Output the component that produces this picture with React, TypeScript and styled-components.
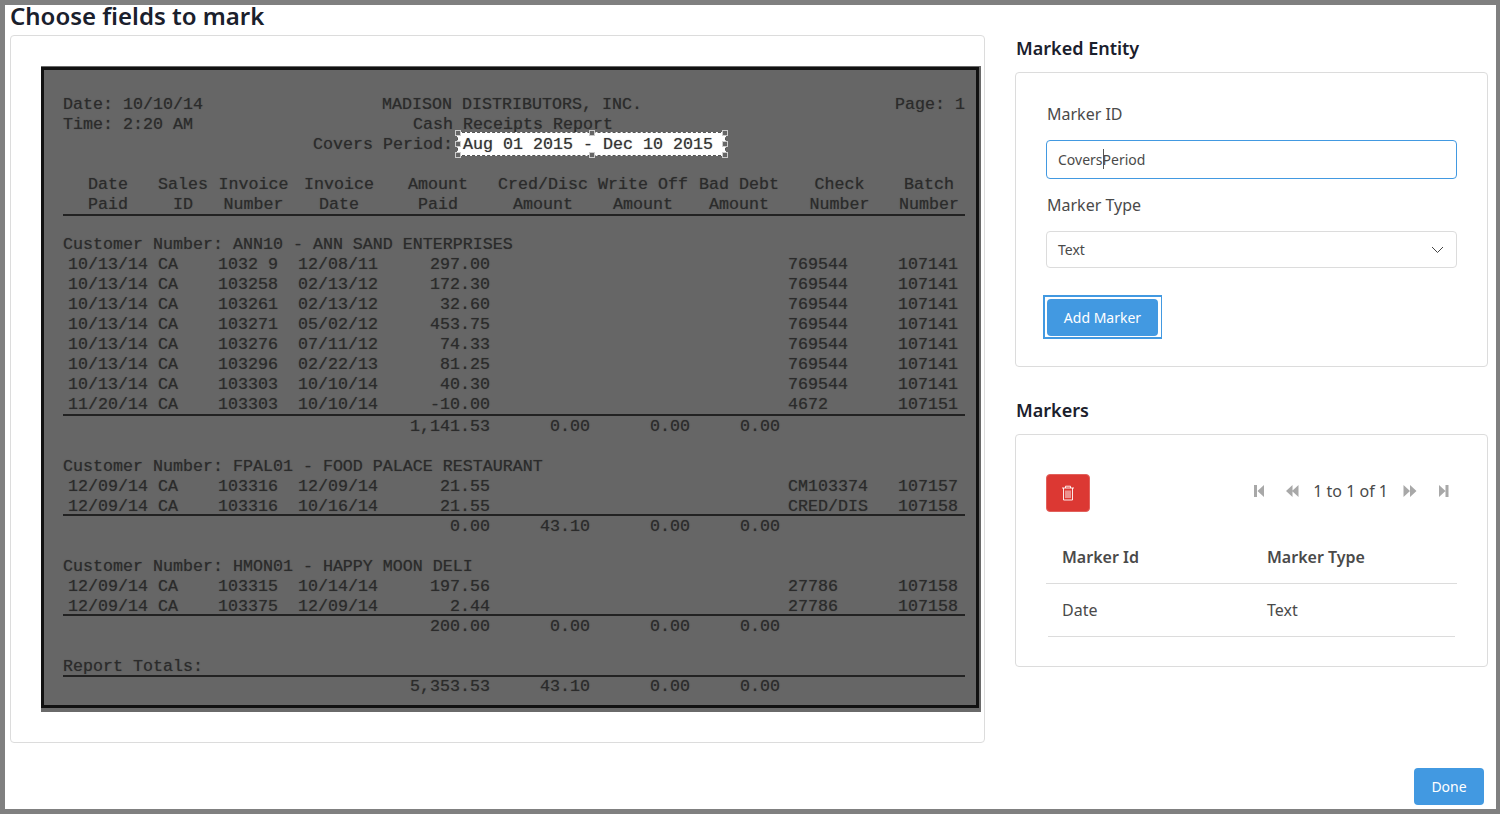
import React from 'react'
import styled, { createGlobalStyle } from 'styled-components'

const GlobalStyle = createGlobalStyle`
  html, body { margin: 0; padding: 0; background: #fff; }
  body { font-family: "Noto Sans", "Open Sans", sans-serif; color: #4a4a4a; }
  * { box-sizing: border-box; }
`

const Frame = styled.div`
  height: 814px;
  border: 5px solid #808080;
  border-right-width: 4px;
  padding: 0 8px 0 5px;
  position: relative;
  overflow: hidden;
`

const PageTitle = styled.h1`
  margin: 0;
  height: 30px;
  font-size: 24px;
  line-height: 22px;
  font-weight: 600;
  color: #1a202c;
`

const Columns = styled.div`
  display: grid;
  grid-template-columns: 975px 473px;
  column-gap: 30px;
`

const Card = styled.section<{ $height: number }>`
  height: ${p => p.$height}px;
  border: 1px solid #dcdcdc;
  border-radius: 4px;
  padding: 30px;
  background: #fff;
`

const DocCard = styled(Card)`
  padding-right: 3px;
`

const Sheet = styled.div`
  width: 940px;
  height: 646px;
  padding: 1px 2px 4px 0;
  background: #6a6a6a;
`

const ReportFrame = styled.div`
  height: 100%;
  border: 3px solid #111;
  background: #666;
  padding: 25px 11px 0 19px;
  font-family: "Liberation Mono", "Courier New", monospace;
  font-size: 16.67px;
  line-height: 20px;
  color: #2b2b2b;
  white-space: pre;
  text-shadow: 0 0 1px rgba(40, 40, 40, 0.55);
`

const Masthead = styled.div`
  display: flex;
  margin-bottom: 20px;
`

const MastLeft = styled.div`
  width: 250px;
`

const MastTitle = styled.div`
  position: relative;
  flex: 1;
`

const TitleLine = styled.div<{ $indent?: number }>`
  padding-left: ${p => p.$indent ?? 0}px;
`

const Selection = styled.div`
  position: absolute;
  left: 144px;
  top: 37px;
  width: 269px;
  height: 24px;
  padding-left: 5px;
  background: #fff;
  border: 1px dashed #555;
  color: #333;
  line-height: 24px;
`

const Handle = styled.i<{ $x: number; $y: number }>`
  position: absolute;
  left: ${p => p.$x}%;
  top: ${p => p.$y}%;
  width: 6px;
  height: 6px;
  transform: translate(-50%, -50%);
  background: #666;
  border: 1px solid #ccc;
`

// the rule printed under a row of the report; $rule is how far it sits above the row's bottom edge
const ruled = (lift?: number) =>
  lift === undefined
    ? ''
    : `
  position: relative;
  &::after {
    content: '';
    position: absolute;
    left: 0;
    right: 0;
    bottom: ${lift}px;
    height: 2px;
    background: #222;
  }
`

const HeadRow = styled.div<{ $rule?: number }>`
  display: grid;
  grid-template-columns: 90px 60px 81px 90px 108px 102px 98px 94px 107px 1fr;
  text-align: center;
  ${p => ruled(p.$rule)}
`

const CustomerRow = styled.div<{ $top?: number; $rule?: number }>`
  margin-top: ${p => p.$top ?? 0}px;
  ${p => ruled(p.$rule)}
`

const DataRow = styled.div<{ $rule?: number; $top?: number }>`
  display: grid;
  grid-template-columns: 150px 80px 112px 80px 100px 100px 90px 118px 1fr;
  padding-left: 5px;
  height: 20px;
  margin-top: ${p => p.$top ?? 0}px;
  ${p => ruled(p.$rule)}
`

const Num = styled.span`
  text-align: right;
`

const Check = styled.span`
  padding-left: 8px;
`

const SectionTitle = styled.h2`
  margin: 0;
  height: 37px;
  padding-left: 1px;
  font-size: 18px;
  line-height: 26px;
  font-weight: 600;
  color: #1a202c;
`

const MarkersTitle = styled(SectionTitle)`
  margin-top: 30px;
`

const Label = styled.div<{ $top?: number }>`
  margin-top: ${p => p.$top ?? 0}px;
  padding-left: 1px;
  font-size: 16px;
  line-height: 24px;
  color: #4a4a4a;
`

const InputBox = styled.div`
  height: 39px;
  margin: 14px 0 14px;
  padding: 0 11px;
  border: 1px solid #4299e1;
  border-radius: 4px;
  font-size: 14px;
  line-height: 37px;
  color: #4a4a4a;
  display: flex;
`

const Caret = styled.span`
  width: 1px;
  height: 20px;
  margin: 8px -1px 0 0;
  background: #555;
`

const SelectBox = styled.div`
  height: 37px;
  margin: 14px 0 0;
  padding: 0 12px 0 11px;
  border: 1px solid #dcdcdc;
  border-radius: 4px;
  font-size: 14px;
  line-height: 35px;
  color: #4a4a4a;
  display: flex;
  align-items: center;
  justify-content: space-between;
`

const Button = styled.button`
  display: block;
  height: 37px;
  padding: 0 16px;
  border: 0;
  border-radius: 4px;
  background: #4299e1;
  color: #fff;
  font-family: inherit;
  font-size: 14px;
  line-height: 37px;
`

const AddButton = styled(Button)`
  position: relative;
  margin: 31px 0 0 1px;
  width: 111px;
  padding: 0;

  &::after {
    content: '';
    position: absolute;
    inset: -4px -4px -3px -4px;
    border: solid #4299e1;
    border-width: 2px 1px 2px 2px;
  }
`

const DoneButton = styled(Button)`
  position: absolute;
  right: 12px;
  bottom: 4px;
  width: 70px;
  padding: 0;
`

const Toolbar = styled.div`
  display: flex;
  justify-content: space-between;
  align-items: flex-start;
  margin-top: 9px;
`

const DeleteButton = styled.button`
  width: 44px;
  height: 38px;
  padding: 0;
  border: 1px solid #e2615c;
  border-radius: 4px;
  background: #dc3833;
  display: flex;
  align-items: center;
  justify-content: center;
`

const Pager = styled.div`
  display: flex;
  align-items: center;
  gap: 14px;
  height: 24px;
  margin: 5px 5px 0 0;
  font-size: 16px;
  line-height: 24px;
  color: #4a4a4a;
`

const PagerIcon = styled.svg<{ $before?: number; $after?: number }>`
  width: 16px;
  height: 14px;
  fill: #a8a8a8;
  margin-left: ${p => p.$before ?? 0}px;
  margin-right: ${p => p.$after ?? 0}px;
`

const TableRow = styled.div<{ $inset?: number; $head?: boolean }>`
  display: grid;
  grid-template-columns: 205px 1fr;
  margin: 0 ${p => p.$inset ?? 0}px;
  padding-left: ${p => 16 - (p.$inset ?? 0)}px;
  height: 53px;
  border-bottom: 1px solid #dcdcdc;
  font-size: 16px;
  font-weight: ${p => (p.$head ? 600 : 400)};
  line-height: ${p => (p.$head ? 52 : 53)}px;
  color: #4a4a4a;
`

const TableHead = styled(TableRow)`
  margin-top: 19px;
`

type Cells = [string, string, string, string, string?, string?, string?, string?, string?]

const receipts1: Cells[] = [
  ['10/13/14 CA', '1032 9', '12/08/11', '297.00', '', '', '', '769544', '107141'],
  ['10/13/14 CA', '103258', '02/13/12', '172.30', '', '', '', '769544', '107141'],
  ['10/13/14 CA', '103261', '02/13/12', '32.60', '', '', '', '769544', '107141'],
  ['10/13/14 CA', '103271', '05/02/12', '453.75', '', '', '', '769544', '107141'],
  ['10/13/14 CA', '103276', '07/11/12', '74.33', '', '', '', '769544', '107141'],
  ['10/13/14 CA', '103296', '02/22/13', '81.25', '', '', '', '769544', '107141'],
  ['10/13/14 CA', '103303', '10/10/14', '40.30', '', '', '', '769544', '107141'],
  ['11/20/14 CA', '103303', '10/10/14', '-10.00', '', '', '', '4672', '107151'],
]

const receipts2: Cells[] = [
  ['12/09/14 CA', '103316', '12/09/14', '21.55', '', '', '', 'CM103374', '107157'],
  ['12/09/14 CA', '103316', '10/16/14', '21.55', '', '', '', 'CRED/DIS', '107158'],
]

const receipts3: Cells[] = [
  ['12/09/14 CA', '103315', '10/14/14', '197.56', '', '', '', '27786', '107158'],
  ['12/09/14 CA', '103375', '12/09/14', '2.44', '', '', '', '27786', '107158'],
]

const Row = ({ cells, rule, top }: { cells: Cells; rule?: number; top?: number }) => (
  <DataRow $rule={rule} $top={top}>
    <span>{cells[0]}</span>
    <span>{cells[1]}</span>
    <span>{cells[2]}</span>
    <Num>{cells[3]}</Num>
    <Num>{cells[4]}</Num>
    <Num>{cells[5]}</Num>
    <Num>{cells[6]}</Num>
    <Check>{cells[7]}</Check>
    <span>{cells[8]}</span>
  </DataRow>
)

const handles = [
  [0, 0], [50, 0], [100, 0],
  [0, 50], [100, 50],
  [0, 100], [50, 100], [100, 100],
]

const Report = () => (
  <Sheet>
    <ReportFrame>
      <Masthead>
        <MastLeft>
          <div>Date: 10/10/14</div>
          <div>Time: 2:20 AM</div>
        </MastLeft>
        <MastTitle>
          <TitleLine $indent={69}>MADISON DISTRIBUTORS, INC.</TitleLine>
          <TitleLine $indent={100}>Cash Receipts Report</TitleLine>
          <TitleLine>Covers Period:</TitleLine>
          <Selection>
            Aug 01 2015 - Dec 10 2015
            {handles.map(([x, y]) => <Handle key={`${x}-${y}`} $x={x} $y={y} />)}
          </Selection>
        </MastTitle>
        <div>Page: 1</div>
      </Masthead>
      <HeadRow>
        <span>Date</span><span>Sales</span><span>Invoice</span><span>Invoice</span><span>Amount</span>
        <span>Cred/Disc</span><span>Write Off</span><span>Bad Debt</span><span>Check</span><span>Batch</span>
      </HeadRow>
      <HeadRow $rule={-1}>
        <span>Paid</span><span>ID</span><span>Number</span><span>Date</span><span>Paid</span>
        <span>Amount</span><span>Amount</span><span>Amount</span><span>Number</span><span>Number</span>
      </HeadRow>
      <CustomerRow $top={20}>Customer Number: ANN10 - ANN SAND ENTERPRISES</CustomerRow>
      {receipts1.map((r, i) => <Row key={i} cells={r} rule={i === receipts1.length - 1 ? -1 : undefined} />)}
      <Row cells={['', '', '', '1,141.53', '0.00', '0.00', '0.00']} top={2} />
      <CustomerRow $top={20}>Customer Number: FPAL01 - FOOD PALACE RESTAURANT</CustomerRow>
      {receipts2.map((r, i) => <Row key={i} cells={r} rule={i === receipts2.length - 1 ? 1 : undefined} />)}
      <Row cells={['', '', '', '0.00', '43.10', '0.00', '0.00']} />
      <CustomerRow $top={20}>Customer Number: HMON01 - HAPPY MOON DELI</CustomerRow>
      {receipts3.map((r, i) => <Row key={i} cells={r} rule={i === receipts3.length - 1 ? 1 : undefined} />)}
      <Row cells={['', '', '', '200.00', '0.00', '0.00', '0.00']} />
      <CustomerRow $top={20} $rule={0}>Report Totals:</CustomerRow>
      <Row cells={['', '', '', '5,353.53', '43.10', '0.00', '0.00']} />
    </ReportFrame>
  </Sheet>
)

const Chevron = () => (
  <svg width="13" height="8" viewBox="0 0 13 8" fill="none" stroke="#444" strokeWidth="1">
    <path d="M1 1l5.5 5.5L12 1" />
  </svg>
)

const TrashIcon = () => (
  <svg width="14" height="16" viewBox="0 0 14 16" fill="none" stroke="#fff" strokeWidth="0.9">
    <path d="M1 3h12M4.5 3V1.2h5V3M2.5 3v12h9V3M5 5.5v7.5M7 5.5v7.5M9 5.5v7.5" />
  </svg>
)

const App = () => (
  <Frame>
    <GlobalStyle />
    <PageTitle>Choose fields to mark</PageTitle>
    <Columns>
      <DocCard $height={708}>
        <Report />
      </DocCard>
      <div>
        <SectionTitle>Marked Entity</SectionTitle>
        <Card $height={295}>
          <Label $top={-1}>Marker ID</Label>
          <InputBox>Covers<Caret />Period</InputBox>
          <Label>Marker Type</Label>
          <SelectBox>Text<Chevron /></SelectBox>
          <AddButton>Add Marker</AddButton>
        </Card>
        <MarkersTitle>Markers</MarkersTitle>
        <Card $height={233}>
          <Toolbar>
            <DeleteButton aria-label="Delete"><TrashIcon /></DeleteButton>
            <Pager>
              <PagerIcon viewBox="0 0 16 14" $after={4}><path d="M5 1h3v12H5zM8.5 7L15 1v12z" /></PagerIcon>
              <PagerIcon viewBox="0 0 16 14"><path d="M3 7l6.5-6v12zM9 7l6.5-6v12z" /></PagerIcon>
              <span>1 to 1 of 1</span>
              <PagerIcon viewBox="0 0 16 14"><path d="M1.5 1L8 7l-6.5 6zM8 1l6.5 6L8 13z" /></PagerIcon>
              <PagerIcon viewBox="0 0 16 14" $before={4}><path d="M3 1l6.5 6L3 13zM9.5 1h3v12h-3z" /></PagerIcon>
            </Pager>
          </Toolbar>
          <TableHead $head>
            <span>Marker Id</span>
            <span>Marker Type</span>
          </TableHead>
          <TableRow $inset={2}>
            <span>Date</span>
            <span>Text</span>
          </TableRow>
        </Card>
      </div>
    </Columns>
    <DoneButton>Done</DoneButton>
  </Frame>
)

export default App
